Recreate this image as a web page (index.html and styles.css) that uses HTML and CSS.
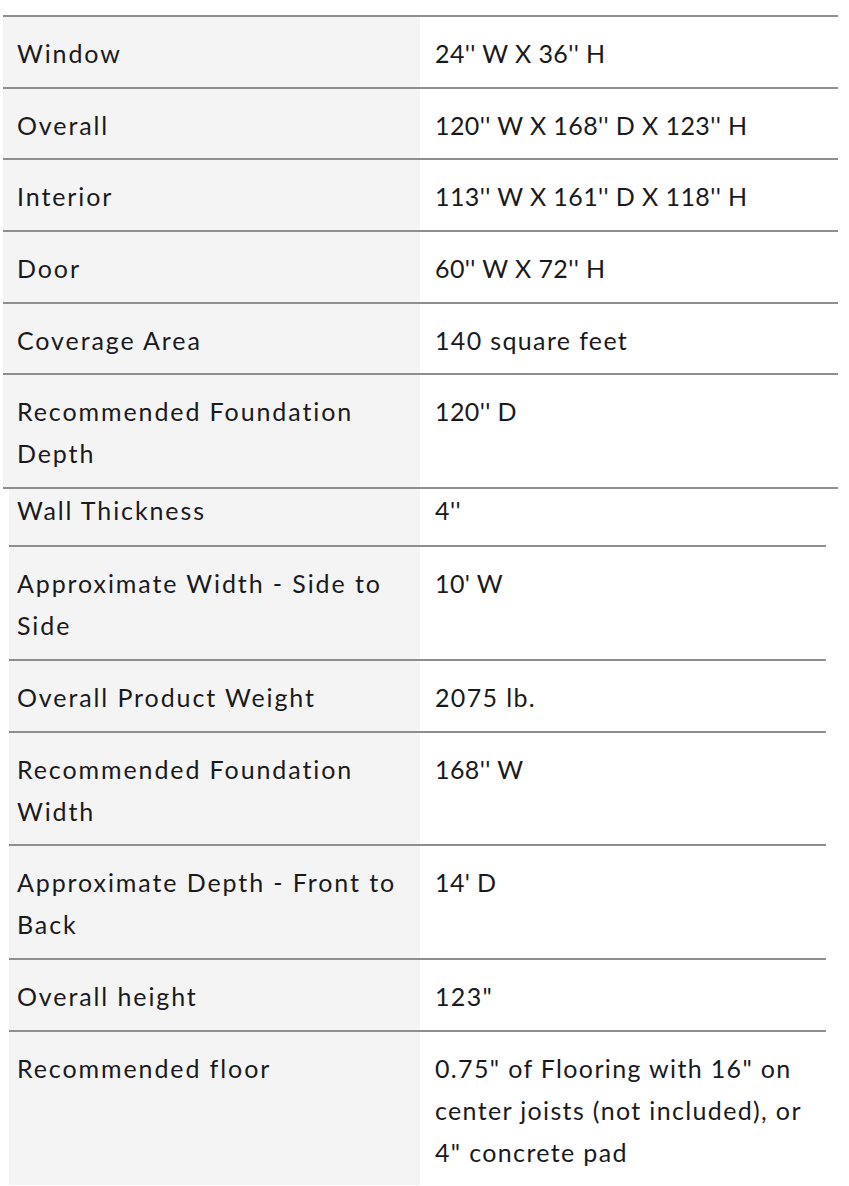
FILE: index.html
```html
<!DOCTYPE html>
<html>
<head>
<meta charset="utf-8">
<link rel="stylesheet" href="styles.css">
</head>
<body>
<div class="specs specs-top">
  <div class="row"><div class="label">Window</div><div class="value dim">24'' W X 36'' H</div></div>
  <div class="row"><div class="label">Overall</div><div class="value dim">120'' W X 168'' D X 123'' H</div></div>
  <div class="row"><div class="label">Interior</div><div class="value dim">113'' W X 161'' D X 118'' H</div></div>
  <div class="row"><div class="label">Door</div><div class="value dim">60'' W X 72'' H</div></div>
  <div class="row"><div class="label">Coverage Area</div><div class="value">140 square feet</div></div>
  <div class="row"><div class="label">Recommended Foundation Depth</div><div class="value dim">120'' D</div></div>
</div>
<div class="specs specs-bottom">
  <div class="row row-short"><div class="label">Wall Thickness</div><div class="value dim">4''</div></div>
  <div class="row"><div class="label">Approximate Width - Side to Side</div><div class="value dim">10' W</div></div>
  <div class="row"><div class="label">Overall Product Weight</div><div class="value">2075 lb.</div></div>
  <div class="row"><div class="label">Recommended Foundation Width</div><div class="value dim">168'' W</div></div>
  <div class="row"><div class="label">Approximate Depth - Front to Back</div><div class="value dim">14' D</div></div>
  <div class="row"><div class="label">Overall height</div><div class="value">123"</div></div>
  <div class="row"><div class="label">Recommended floor</div><div class="value">0.75" of Flooring with 16" on center joists (not included), or 4" concrete pad</div></div>
</div>
</body>
</html>
```
FILE: styles.css
```css
html, body {
  margin: 0;
  padding: 0;
  background: #ffffff;
}
body {
  font-family: "Lato", "Open Sans", sans-serif;
  font-size: 25px;
  letter-spacing: 1.9px;
  line-height: 42px;
  color: #1a1a1d;
  padding-top: 15px;
  overflow: hidden;
}
.specs {
  display: flex;
  flex-direction: column;
}
.specs-top {
  margin-left: 3px;
  width: 835px;
  border-bottom: 2px solid #8e8e8e;
}
.specs-bottom {
  margin-left: 9px;
  width: 817px;
}
.row {
  display: grid;
  border-top: 2px solid #8e8e8e;
}
.specs-bottom .row:first-child {
  border-top: none;
}
.specs-top .row {
  grid-template-columns: 417px 1fr;
}
.specs-bottom .row {
  grid-template-columns: 411px 1fr;
}
.label {
  background: #f4f4f4;
  padding: 15px 18px 12.7px 14px;
}
.specs-bottom .label {
  padding-left: 8px;
}
.value {
  padding: 15px 15px 12.7px 15px;
  letter-spacing: 1.35px;
}
.value.dim {
  letter-spacing: 0.4px;
}
.row-short .label,
.row-short .value {
  padding-top: 0;
  padding-bottom: 14px;
}
```
